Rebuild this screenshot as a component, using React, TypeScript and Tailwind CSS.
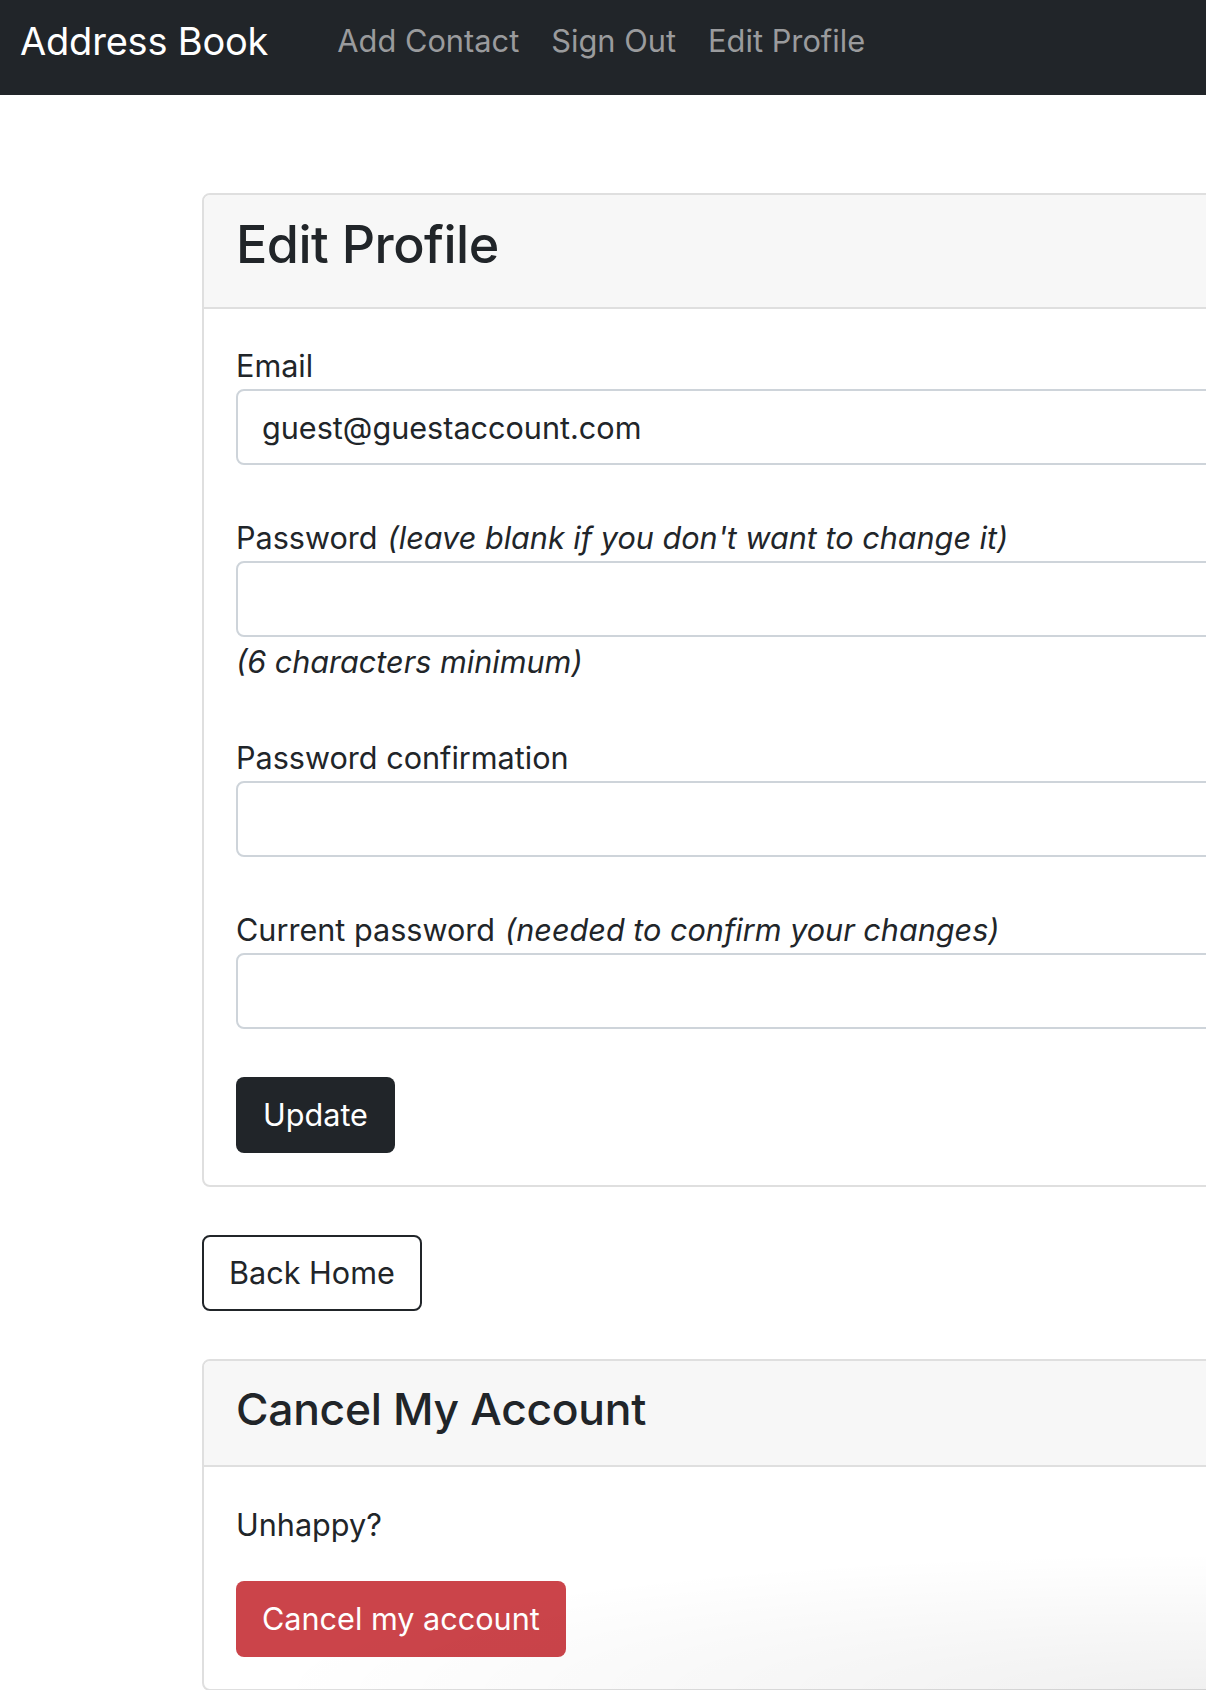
import React from "react";

const NAV = ["Add Contact", "Sign Out", "Edit Profile"];

function Field({
  label,
  hint,
  value,
  note,
  type = "text",
}: {
  label: string;
  hint?: string;
  value?: string;
  note?: string;
  type?: string;
}) {
  return (
    <div className="mb-[48px]">
      <label className="block pt-[2px] text-[30.6px] leading-[46px]">
        {label}
        {hint && <i className="ml-[10px]">{hint}</i>}
      </label>
      <input
        type={type}
        defaultValue={value}
        className="block h-[76px] w-full rounded-[8px] border-2 border-[#ced4da] bg-white px-[24px] text-[30.6px] text-[#212529] outline-none"
      />
      {note && <i className="block pt-[2px] text-[30.6px] leading-[46px]">{note}</i>}
    </div>
  );
}

export default function App() {
  return (
    <div
      className="relative min-h-[1690px] w-[1206px] overflow-hidden bg-white text-[#212529]"
      style={{ fontFamily: "Inter, 'Noto Sans', sans-serif" }}
    >
      {/* Navbar */}
      <nav className="flex h-[95px] items-start bg-[#212529] pt-[11px] pl-[20px]">
        <a className="text-[38px] leading-[60px] tracking-[-0.2px] text-white">Address Book</a>
        <ul className="ml-[53px] flex">
          {NAV.map((item) => (
            <li key={item}>
              <a className="block px-[16px] text-[30.8px] leading-[60px] text-[#9a9b9d]">{item}</a>
            </li>
          ))}
        </ul>
      </nav>

      <main className="pt-[98px] pl-[202px]">
        {/* Edit profile card */}
        <section className="w-[1300px] rounded-[8px] border-2 border-[#dfdfdf]">
          <header className="rounded-t-[6px] border-b-2 border-[#dfdfdf] bg-[#f7f7f7] px-[32px] pt-[19px] pb-[31px]">
            <h3 className="text-[52px] leading-[62px] font-medium tracking-[-0.5px]">Edit Profile</h3>
          </header>
          <div className="px-[32px] pt-[32px] pb-[32px]">
            <Field label="Email" value="guest@guestaccount.com" />
            <Field
              label="Password"
              hint="(leave blank if you don't want to change it)"
              note="(6 characters minimum)"
              type="password"
            />
            <Field label="Password confirmation" type="password" />
            <Field label="Current password" hint="(needed to confirm your changes)" type="password" />
            <button className="h-[76px] rounded-[8px] bg-[#212529] px-[27px] text-[30.6px] text-white">
              Update
            </button>
          </div>
        </section>

        <div className="py-[48px]">
          <a className="inline-flex h-[76px] items-center rounded-[8px] border-2 border-[#212529] px-[25px] text-[30.6px]">
            Back Home
          </a>
        </div>

        {/* Cancel account card */}
        <section className="w-[1300px] rounded-[8px] border-2 border-[#dfdfdf]">
          <header className="rounded-t-[6px] border-b-2 border-[#dfdfdf] bg-[#f7f7f7] px-[32px] pt-[21px] pb-[29px]">
            <h3 className="text-[44.4px] leading-[54px] font-medium tracking-[-0.3px]">Cancel My Account</h3>
          </header>
          <div className="px-[32px] pt-[34px] pb-[32px]">
            <p className="mb-[32px] text-[30.6px] leading-[48px]">Unhappy?</p>
            <button className="h-[76px] rounded-[8px] bg-[#cb444a] px-[26px] text-[30.6px] text-white">
              Cancel my account
            </button>
          </div>
        </section>
      </main>

      {/* faint shadow at the bottom edge */}
      <div className="pointer-events-none absolute right-0 bottom-0 h-[140px] w-[950px] bg-[radial-gradient(ellipse_at_100%_100%,rgba(0,0,0,0.06),rgba(0,0,0,0)_70%)]" />
    </div>
  );
}
